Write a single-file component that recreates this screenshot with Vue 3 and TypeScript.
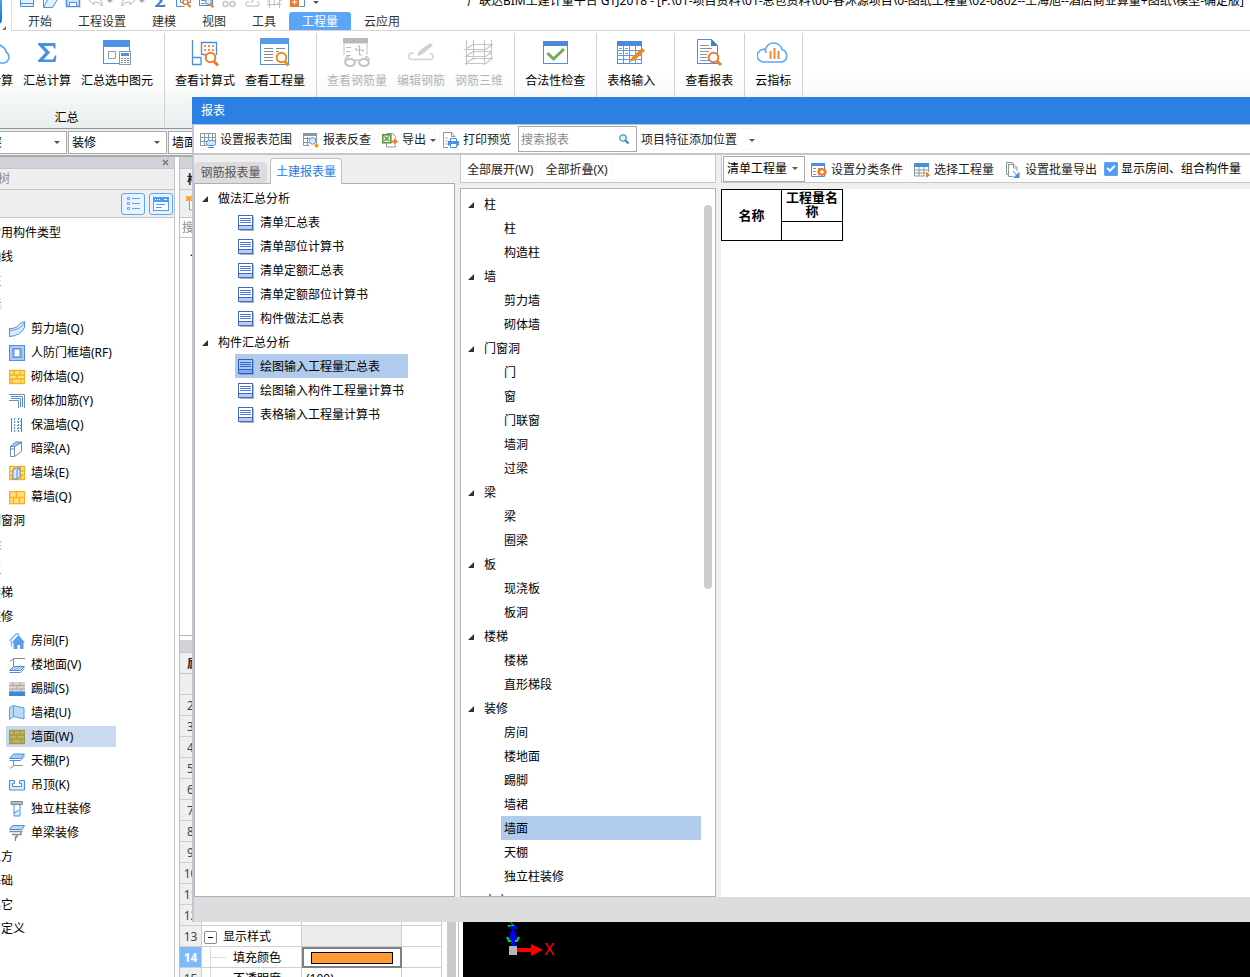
<script setup lang="ts">
import { ref } from 'vue'

interface RibbonItem { label: string; icon: string; disabled?: boolean }
interface RibbonGroup { items: RibbonItem[]; caption?: string; wide?: boolean }
interface NavRow { label: string; icon?: string; selected?: boolean }
interface TreeGroup { label: string; children: string[] }

const quick: { icon: string; drop?: boolean }[] = [
  { icon: 'qNew' }, { icon: 'qOpen' }, { icon: 'qSave' },
  { icon: 'qUndo', drop: true }, { icon: 'qRedo', drop: true },
  { icon: 'qSum' }, { icon: 'qFormula' }, { icon: 'qQuantity' },
  { icon: 'qGlasses' }, { icon: 'qEdit' }, { icon: 'qGrid' }, { icon: 'qAdd' },
]

const tabs = ['开始', '工程设置', '建模', '视图', '工具', '工程量', '云应用']
const activeTab = ref('工程量')

const ribbon: RibbonGroup[] = [
  {
    caption: '汇总',
    items: [
      { label: '云计算', icon: 'cloud' },
      { label: '汇总计算', icon: 'sigma' },
      { label: '汇总选中图元', icon: 'sumSelected' },
    ],
  },
  { items: [{ label: '查看计算式', icon: 'formula' }, { label: '查看工程量', icon: 'quantity' }] },
  {
    items: [
      { label: '查看钢筋量', icon: 'rebarView', disabled: true },
      { label: '编辑钢筋', icon: 'rebarEdit', disabled: true },
      { label: '钢筋三维', icon: 'rebar3d', disabled: true },
    ],
  },
  { items: [{ label: '合法性检查', icon: 'check' }] },
  { items: [{ label: '表格输入', icon: 'tableInput' }], wide: true },
  { items: [{ label: '查看报表', icon: 'report' }] },
  { items: [{ label: '云指标', icon: 'cloudIndex' }] },
]

const nav: NavRow[] = [
  { label: '常用构件类型' }, { label: '轴线' }, { label: '柱' }, { label: '墙' },
  { label: '剪力墙(Q)', icon: 'shearWall' },
  { label: '人防门框墙(RF)', icon: 'frameWall' },
  { label: '砌体墙(Q)', icon: 'brickWall' },
  { label: '砌体加筋(Y)', icon: 'brickRebar' },
  { label: '保温墙(Q)', icon: 'insulation' },
  { label: '暗梁(A)', icon: 'hiddenBeam' },
  { label: '墙垛(E)', icon: 'pier' },
  { label: '幕墙(Q)', icon: 'curtain' },
  { label: '门窗洞' }, { label: '梁' }, { label: '板' }, { label: '楼梯' }, { label: '装修' },
  { label: '房间(F)', icon: 'room' },
  { label: '楼地面(V)', icon: 'floor' },
  { label: '踢脚(S)', icon: 'skirting' },
  { label: '墙裙(U)', icon: 'dado' },
  { label: '墙面(W)', icon: 'wallFace', selected: true },
  { label: '天棚(P)', icon: 'ceiling' },
  { label: '吊顶(K)', icon: 'suspended' },
  { label: '独立柱装修', icon: 'columnFinish' },
  { label: '单梁装修', icon: 'beamFinish' },
  { label: '土方' }, { label: '基础' }, { label: '其它' }, { label: '自定义' },
]

const reports: TreeGroup[] = [
  { label: '做法汇总分析', children: ['清单汇总表', '清单部位计算书', '清单定额汇总表', '清单定额部位计算书', '构件做法汇总表'] },
  { label: '构件汇总分析', children: ['绘图输入工程量汇总表', '绘图输入构件工程量计算书', '表格输入工程量计算书'] },
]
const selectedReport = ref('绘图输入工程量汇总表')

const components: TreeGroup[] = [
  { label: '柱', children: ['柱', '构造柱'] },
  { label: '墙', children: ['剪力墙', '砌体墙'] },
  { label: '门窗洞', children: ['门', '窗', '门联窗', '墙洞', '过梁'] },
  { label: '梁', children: ['梁', '圈梁'] },
  { label: '板', children: ['现浇板', '板洞'] },
  { label: '楼梯', children: ['楼梯', '直形梯段'] },
  { label: '装修', children: ['房间', '楼地面', '踢脚', '墙裙', '墙面', '天棚', '独立柱装修'] },
  { label: '土方', children: [] },
]
const selectedComponent = ref('墙面')
const search = ref('')
const showCombined = ref(true)
const emptyRows = [2, 3, 4, 5, 6, 7, 8, 9, 10, 11, 12]

const brick = (line: string, fill: string) =>
  `<rect x="0.5" y="1.5" width="15" height="13" fill="${fill}" stroke="${line}" stroke-width="1.4"/><path d="M0 6h16M0 10h16M5 1.500v4.500M11 1.500v4.500M8 6v4M3 10v4.500M12 10v4.500" stroke="${line}" stroke-width="1.4" fill="none"/>`

const icons: Record<string, string> = {
  cloud: '<path d="M9 26H7a6.500 6.500 0 0 1-1-12.800A9 9 0 0 1 22 9a8 8 0 0 1 5 6 6 6 0 0 1-2 11z" fill="#fff" stroke="#5aa7f8" stroke-width="1.600"/>',
  sigma: '<path d="M7 6h17.500v5.500H23l-1-2.500H13l6 6.500-6.500 7H22l2-4h1.500L24.500 25H7v-1.500l7.500-8L7 7.500z" fill="#4a90e2"/>',
  sumSelected: '<rect x="2.500" y="3.500" width="26" height="23" fill="#fff" stroke="#4a8fe0"/><path d="M2 3h27v7H2z" fill="#4f94e4"/><path d="M7.500 14.500h7v7h-7z" fill="#fff" stroke="#909ca4"/><rect x="18.500" y="14.500" width="11" height="13" fill="#fff" stroke="#909ca4"/><path d="M20 16h8v3h-8z" fill="#4f94e4"/><path d="M20 21h2v1h-2zM23 21h2v1h-2zM26 21h2v1h-2zM20 23h2v1h-2zM23 23h2v1h-2zM26 23h2v1h-2zM20 25h2v1h-2zM23 25h2v1h-2zM26 25h2v1h-2z" fill="#7d8a92"/>',
  formula: '<path d="M3.500 3v25M3 27.500h9V20.500H3.500M12.500 18V5.500h15V18M12.500 17.500H17" fill="none" stroke="#4a8fe0" stroke-width="1.300"/><path d="M15 8h2v2h-2zM19 8h2v2h-2zM23 8h2v2h-2zM15 12h2v2h-2zM19 12h2v2h-2zM23 12h2v2h-2z" fill="#f28a4a"/><circle cx="21.500" cy="20.500" r="4.800" fill="#fff" stroke="#f07a2a" stroke-width="2"/><path d="M25 24.500l4 4" stroke="#f07a2a" stroke-width="3"/>',
  quantity: '<rect x="1.500" y="1.500" width="28" height="26" fill="#fff" stroke="#4a8fe0"/><path d="M1 1h29v6H1z" fill="#5a9be6"/><path d="M5 11.500h9M5 14.500h9M5 17.500h9M5 20.500h9M5 23.500h9M17 11.500h9M17 14.500h3" stroke="#7f8b93"/><circle cx="22.500" cy="20.500" r="4.800" fill="#fff" stroke="#f08a1e" stroke-width="2"/><path d="M26 24.500l3.500 4" stroke="#f08a1e" stroke-width="3"/>',
  rebarView: '<path d="M3 18V6h23v12" fill="none" stroke="#c2c2c2"/><path d="M2 1h25v5H2z" fill="#b9b9b9"/><path d="M5 10.500h5M5 14.500h4M5 18.500h5M14 13h9M18.500 9v9M15 11v2M22 15v-2M17 9h2M18 18h3" stroke="#bdbdbd" fill="none" stroke-width="1.200"/><path d="M4 23q1-4 4-3M28 23q-1-4-4-3M13 24q3-2 6 0" stroke="#c2c2c2" stroke-width="1.500" fill="none"/><ellipse cx="9" cy="25.500" rx="4.800" ry="3.500" fill="#fff" stroke="#c2c2c2" stroke-width="2.200"/><ellipse cx="23" cy="25.500" rx="4.800" ry="3.500" fill="#fff" stroke="#c2c2c2" stroke-width="2.200"/>',
  rebarEdit: '<path d="M9 16H7a3 3 0 0 0 0 6.500h18a3 3 0 0 0 0-6" fill="none" stroke="#d4d4d4" stroke-width="1.500"/><path d="M12 19l2-5L25 6l3 2.500-11 9z" fill="#d0d0d0"/>',
  rebar3d: '<path d="M3.500 3v25M10.500 3v20M21.500 3v25M28.500 3v20M2 12.500h21l6-5H10zM2 19.500h21l6-5M2 26.500h21l6-5H10l-8 5M10 14.500h19M10 14.500l-7 5" fill="none" stroke="#c4c4c4" stroke-width="1.100"/>',
  check: '<rect x="4.500" y="4.500" width="24" height="22" fill="#fff" stroke="#4a8fe0"/><path d="M4 4h25v5H4z" fill="#4a8ad8"/><path d="M8.500 16l6 6L25 12" fill="none" stroke="#72ad55" stroke-width="3"/>',
  tableInput: '<rect x="2.500" y="4.500" width="24" height="22" fill="#fff" stroke="#4a8fe0"/><path d="M2 4h25v5H2z" fill="#4a8ad8"/><path d="M2 13.500h25M2 18.500h25M2 22.500h25M8.500 9v18M14.500 9v18M20.500 9v18" stroke="#5a9be6"/><path d="M4 11.500h3M10 11.500h3M4 16.500h3M10 16.500h3" stroke="#909ca4"/><path d="M15 25l2-5L27 11l3 2.500L20 23z" fill="#f08a1e"/>',
  report: '<path d="M4.500 2.500h14l6 6v18h-20z" fill="#fff" stroke="#4a8fe0"/><path d="M18 2l7 7h-7z" fill="#3f7fd0"/><path d="M7 8.500h9M7 11.500h12M7 14.500h9M7 17.500h7M7 20.500h7M7 23.500h9" stroke="#8b979f"/><circle cx="20.500" cy="20.500" r="4.800" fill="#fff" stroke="#f07a2a" stroke-width="2"/><path d="M24 24l4 4" stroke="#f07a2a" stroke-width="3"/>',
  cloudIndex: '<path d="M10 25H7a6.200 6.200 0 0 1-2-12.200 5 5 0 0 1 3.500-.5A8.500 8.500 0 0 1 25 12.500a6.500 6.500 0 0 1 0 12.500H10M9 16a5 5 0 0 0-1-3" fill="#fff" stroke="#5aa7f8" stroke-width="1.600"/><path d="M13.500 22v-8M17.500 22V11M21.500 22v-8" stroke="#f28a3c" stroke-width="2"/>',

  qNew: '<path d="M1.500 2.500h13v12h-13zM1 11.500h14" fill="#e3f0fd" stroke="#4a8fe0"/>',
  qOpen: '<path d="M1.500 15.500l4-8h10l-5 8zM1.500 15V2" fill="#e3f0fd" stroke="#4a8fe0"/>',
  qSave: '<path d="M1.500 2.500h13v12h-13z" fill="#cfe3fb" stroke="#4a8fe0" stroke-width="1.500"/><path d="M4.500 10.500h7v4h-7z" fill="#fff" stroke="#4a8fe0"/>',
  qUndo: '<path d="M1 8l5-5v3c6 0 9 3 8 8-1-3-4-4-8-4v3z" fill="#fff" stroke="#b4b4b4"/>',
  qRedo: '<path d="M15 8l-5-5v3c-6 0-9 3-8 8 1-3 4-4 8-4v3z" fill="#fff" stroke="#b4b4b4"/>',
  qSum: '<path d="M3 2h10v3H7l4 4-4 4h5.500l1-1.500L13 15H3v-1l5-5-5-5z" fill="#4a7fd0"/>',
  qFormula: '<path d="M1.500 0v14.500h8M5.500 10.500V2.500h10v8z" fill="none" stroke="#4a8fe0"/><circle cx="10.500" cy="10" r="2.500" fill="#fff" stroke="#f07a2a" stroke-width="1.500"/><path d="M12.500 12l3 3" stroke="#f07a2a" stroke-width="2"/>',
  qQuantity: '<path d="M1.500 1.500h13v12h-13z" fill="#fff" stroke="#4a8fe0"/><path d="M3 8.500h4M3 11.500h4" stroke="#888"/><circle cx="10.500" cy="9.500" r="3" fill="#dbe9fb" stroke="#4a7fd0"/><path d="M12.500 12l3 3" stroke="#f08a1e" stroke-width="3"/>',
  qGlasses: '<path d="M2 2h12v5H2z" fill="none" stroke="#ccc"/><circle cx="4.500" cy="12" r="2.500" fill="none" stroke="#c4c4c4" stroke-width="1.500"/><circle cx="11.500" cy="12" r="2.500" fill="none" stroke="#c4c4c4" stroke-width="1.500"/>',
  qEdit: '<path d="M5 10H4a2 2 0 0 0 0 4h9a2 2 0 0 0 0-4M7 11l6-7" fill="none" stroke="#ccc" stroke-width="1.300"/>',
  qGrid: '<path d="M2.500 0v16M7.500 0v14M12.500 0v16M0 7.500h16M0 12.500h14M0 10l4-3M10 12l5-4" fill="none" stroke="#c0c0c0"/>',
  qAdd: '<path d="M10 4.500h4.500v10H10" fill="none" stroke="#4a8fe0"/><path d="M0 5h9v10H0z" fill="#f07a2a"/><path d="M2 10h5M4.500 7.500v5" stroke="#fff"/>',

  range: '<path d="M.5 1.500h15v9M.5 1.500v12h6M.5 5.500h15M.5 9.500h7M4.500 1v13M8.500 1v7M12.500 1v7" fill="none" stroke="#8b979f"/><rect x="6.500" y="8.500" width="9" height="5" rx="2" fill="#cfe3fb" stroke="#4a8fe0"/><path d="M8 15.500h6" stroke="#4a8fe0"/>',
  backcheck: '<path d="M.5 1.500h13v10M.5 1.500v12h6M.5 6.500h13M.5 10.500h6M4.500 5v9M9.500 5v3" fill="none" stroke="#8b979f"/><path d="M0 1h14v3H0z" fill="#8b979f"/><circle cx="9.500" cy="9" r="3.200" fill="#dbe9fb" stroke="#6f9bd8"/><path d="M13.500 11l2.500 2.500-2.500 2.500-2.500-2.500z" fill="#f59a1e"/>',
  export: '<path d="M4.500 1.500h6l3 3v2M13.500 13v2h-9V12" fill="#fff" stroke="#8b979f"/><rect x=".8" y="2.800" width="8" height="8" fill="#e6f3e0" stroke="#5a9a3c" stroke-width="1.600"/><path d="M2.500 4.500l4.500 4.500M7 4.500l-4.500 4.500" stroke="#5a9a3c" stroke-width="1.300"/><path d="M9 8.500h3V6l4 3.500-4 3.500v-2.500H9z" fill="#f07a2a"/>',
  print: '<path d="M9 .5H.5v15H5M8.500.5l3.500 4h-3.500z" fill="#fff" stroke="#8b979f"/><path d="M2.500 6h2M2.500 9h2M2.500 12h2" stroke="#8b979f"/><path d="M5 9h11v4.500H5z" fill="#4a8fe0"/><path d="M7.500 6.500h6v3h-6zM7.500 11.500h6v4h-6z" fill="#fff" stroke="#4a8fe0"/>',
  classify: '<path d="M.5 1.500h13v13H.5z" fill="#fff" stroke="#4a8fe0"/><path d="M0 1h14v3H0z" fill="#4a8fe0"/><path d="M2 6.500h3M7 6.500h4M2 9.500h3M2 12.500h3" stroke="#8b979f"/><path d="M11 5.500l1.500 1.300 2-.3.500 2 1 1.500-1 1.500-.5 2-2-.3-1.500 1.300-1.500-1.300-2 .3-.5-2-1-1.500 1-1.500.5-2 2 .3z" fill="#f07a2a"/><circle cx="11" cy="10" r="1.800" fill="#fff"/>',
  choose: '<path d="M0 1h15v4H0z" fill="#4a8fe0"/><path d="M.5 4.500v9.500h10M14.500 4.500V10M.5 8h14M.5 11h11M5 5v9M10 5v9" fill="none" stroke="#8b979f"/><path d="M12 9.500l4 3.500-4 3z" fill="#f07a2a"/>',
  batch: '<path d="M3 12.500H1.500V.5H7L9 2M3.500 2.500H9l3 3V9M3.500 2.500v12H8" fill="none" stroke="#8b979f"/><path d="M8.500 2.500V6H12" fill="none" stroke="#8b979f"/><path d="M8 9l4 4.500M14 10.500V16H8.500z" fill="#4a8fe0" stroke="#4a8fe0"/>',
  sheet: '<path d="M2 15h14V2" fill="none" stroke="#9aa0a8" stroke-width="1.500"/><rect x=".5" y=".5" width="14" height="14" fill="#fff" stroke="#4369c0"/><path d="M1 11h13v3H1z" fill="#b9cdf7"/><path d="M.5 10.500h14" stroke="#4369c0"/><path d="M2 3.500h11M2 5.500h11M2 7.500h11" stroke="#4f7be0"/>',
  sheetOn: '<path d="M2 15h14V2" fill="none" stroke="#7f92b4" stroke-width="1.500"/><rect x=".5" y=".5" width="14" height="14" fill="#a9c9f5" stroke="#2f5fb8"/><path d="M1 11h13v3H1z" fill="#7fa8ee"/><path d="M.5 10.500h14M2 3.500h11M2 5.500h11M2 7.500h11" stroke="#2f66c8"/>',

  shearWall: '<path d="M.5 7.500Q8 8 11.500 2L15.500.5v6Q11 15 .5 15.500z" fill="#dbeafc" stroke="#4a8fe0"/><path d="M.5 9.500Q11 9.500 15.500 1.500" fill="none" stroke="#6a97cc"/>',
  frameWall: '<rect x=".5" y=".5" width="15" height="15" fill="#a9cdf8" stroke="#4a8fe0"/><rect x="3.500" y="3.500" width="9" height="9" fill="#a9cdf8" stroke="#6aa4ea"/><rect x="5" y="4" width="6" height="8" fill="#fff" stroke="#5a86b8"/>',
  brickWall: brick('#fbb116', '#ffe08a'),
  brickRebar: '<path d="M0 1.500h15.500V15M0 7.500h9.500V15" fill="none" stroke="#808c94"/><path d="M2 3.500h11.500V14M2 5.500h9.500V14" fill="none" stroke="#4a8fe0"/>',
  insulation: '<path d="M2.500 1v14M12.500 1v14" stroke="#4a7fc0"/><path d="M5.500 1v14M9.500 1v14" stroke="#4a8fe0" stroke-dasharray="2 1"/><path d="M2 4.500h11M2 8.500h11M2 11.500h11" stroke="#4a8fe0" stroke-dasharray="1 2"/>',
  hiddenBeam: '<path d="M1.500 5.500h4v10h-4zM5.500 15.500l7-5V1.500l-7 4" fill="#fff" stroke="#808c94"/><path d="M1.500 5.500l5-4.500h6.500l-7.500 4.500zM1.500 8h4" fill="#a9cdf8" stroke="#4a8fe0"/>',
  pier: brick('#fbb116', '#ffe08a') + '<path d="M4 5l3-2h4v9l-3 2H4z" fill="#dbeafc" stroke="#4a8fe0"/><path d="M8 14V5L11 3" fill="none" stroke="#4a8fe0"/>',
  curtain: '<rect x=".6" y="2.600" width="15" height="12" fill="#ffe08a" stroke="#fbb116" stroke-width="1.400"/><path d="M0 8.500h16M7.500 2v6.500M10.500 8.500V15M4.500 8.500V15" stroke="#fbb116" stroke-width="1.400"/>',
  room: '<path d="M.5 8L7 1h3M2.500 8v5.500" fill="none" stroke="#7fb2f0" stroke-width="1.300"/><path d="M2.500 9.500l7-7.500L16 9.500h-1.500V16h-3.500v-4H8.500v4H4.500V9.500z" fill="#5a9fee"/>',
  floor: '<path d="M4.500 9.500V1.500H16M1 4.500l4-3" fill="none" stroke="#808c94"/><path d="M.5 13.500l4-4h11l-4 4z" fill="#a9cdf8" stroke="#4a8fe0"/><path d="M.5 15.500h11l4-4" fill="none" stroke="#4a8fe0"/>',
  skirting: '<path d="M0 1h16v10H0z" fill="#d4d4d4"/><path d="M0 4.500h16M0 8h16M4 1v3M11 1v3M8 5v3M3 8v3M12 8v3" stroke="#a9a9a9"/><path d="M0 10.500h16V15H0z" fill="#3f87dc"/>',
  dado: '<path d="M.5 2.500l4-2v11l-4 3zM4.500.5L15 3v11l-10.500-2.500z" fill="#bcd8f9" stroke="#5a9be6"/>',
  wallFace: brick('#a59a3a', '#b9b56c'),
  ceiling: '<path d="M.5 5.500l4-4.500h11l-3.500 4.500z" fill="#a9cdf8" stroke="#4a8fe0"/><path d="M4.500 8v4.500H14M1 15.500l4-3" fill="none" stroke="#808c94"/><path d="M.5 7.500h11l4-4.500" fill="none" stroke="#4a8fe0"/>',
  suspended: '<path d="M.5 3.500h5v3h-2v3h9v-3h-2v-3h5v9.500H.5z" fill="#dbeafc" stroke="#4a8fe0"/>',
  columnFinish: '<path d="M2 .5h11.500v3H2z" fill="#b4bcc2" stroke="#808c94"/><path d="M5 10h5v5H5z" fill="#dbeafc"/><path d="M5 4v11h6V4M5 12l5-3" fill="none" stroke="#4a8fe0"/>',
  beamFinish: '<path d="M.5 4.500l3-4h12l-2.500 4z" fill="#bcd8f9" stroke="#4a8fe0"/><path d="M.5 6.500h13M3 9.500h9V7M8 10v2H6.500v4" fill="none" stroke="#808c94" stroke-width="1.400"/>',
  newItem: '<path d="M3.500 4v11h9V4" fill="#fff" stroke="#8b979f"/><path d="M0 1h6v5H0z" fill="#ffc04a"/><path d="M0 1l6 5M6 1L0 6" stroke="#f08a1e"/>',
}
</script>

<template>
  <div class="app">
    <header class="ribbon">
      <span class="logo"></span>
      <svg class="logo-corner" viewBox="0 0 5 5" aria-hidden="true"><path d="M5 0v5H0z" fill="#777" /></svg>
      <div class="top">
        <div class="quick">
          <button v-for="q in quick" :key="q.icon" type="button" :class="{ split: q.drop }">
            <svg class="i16" viewBox="0 0 16 16" v-html="icons[q.icon]"></svg>
            <svg v-if="q.drop" class="caret" viewBox="0 0 6 3"><path d="M0 0h6L3 3z" fill="#aaa" /></svg>
          </button>
          <button type="button" class="more"><svg class="caret" viewBox="0 0 6 3"><path d="M0 0h6L3 3z" fill="#555" /></svg></button>
        </div>
        <p class="title">广联达BIM土建计量平台 GTJ2018 - [F:\01-项目资料\01-总包资料\00-春沐源项目\0-图纸工程量\02-0802--王海旭--酒店商业算量+图纸\模型-确定版]</p>
      </div>
      <nav class="tabs">
        <button v-for="t in tabs" :key="t" type="button" :class="{ active: t === activeTab }" @click="activeTab = t">{{ t }}</button>
      </nav>
      <div class="groups">
        <section v-for="(g, gi) in ribbon" :key="gi" class="group" :class="{ wide: g.wide }">
          <div class="group-items">
            <button v-for="b in g.items" :key="b.label" type="button" :disabled="b.disabled">
              <svg class="i32" viewBox="0 0 32 32" v-html="icons[b.icon]"></svg>
              <span>{{ b.label }}</span>
            </button>
          </div>
          <p v-if="g.caption" class="caption">{{ g.caption }}</p>
        </section>
      </div>
    </header>

    <div class="filters">
      <label v-for="(f, i) in ['首层', '装修', '墙面']" :key="f" class="combo" :class="'combo-' + i">
        <select :aria-label="f"><option>{{ f }}</option></select>
        <svg class="caret" viewBox="0 0 6 3"><path d="M0 0h6L3 3z" fill="#555" /></svg>
      </label>
    </div>

    <div class="workspace">
      <aside class="nav-panel">
        <div class="grip"><button type="button" aria-label="关闭"><svg viewBox="0 0 7 7"><path d="M1 1l5 5M6 1L1 6" stroke="#777" stroke-width="1.500" /></svg></button></div>
        <h2>导航树</h2>
        <div class="nav-tools">
          <button type="button" aria-label="列表">
            <svg viewBox="0 0 16 14"><path d="M2.500.5h2v2h-2zM2.500 5.500h2v2h-2zM2.500 10.500h2v2h-2z" fill="#fff" stroke="#5aa7f8" /><path d="M7 1.500h8M7 6.500h8M7 11.500h8" stroke="#5aa7f8" /></svg>
          </button>
          <button type="button" aria-label="卡片">
            <svg viewBox="0 0 16 14"><rect x=".5" y=".5" width="15" height="13" fill="#fff" stroke="#4a9cf5" /><path d="M0 0h16v5H0z" fill="#4a9cf5" /><path d="M2 2.500h1M4 2.500h1M6 2.500h1M11 2.500h3" stroke="#fff" /><path d="M3 7.500h9M3 10.500h6" stroke="#4a9cf5" /></svg>
          </button>
        </div>
        <ul>
          <li v-for="n in nav" :key="n.label" :class="{ leaf: n.icon, selected: n.selected }">
            <span class="nav-item">
              <svg v-if="n.icon" class="i16" viewBox="0 0 16 16" v-html="icons[n.icon]"></svg>{{ n.label }}
            </span>
          </li>
        </ul>
      </aside>

      <div class="side">
        <section class="comp-list">
          <div class="grip"></div>
          <h2>构件列表</h2>
          <div class="comp-tools"><svg class="i16" viewBox="0 0 16 16" v-html="icons.newItem"></svg></div>
          <input type="text" placeholder="搜索构件..." aria-label="搜索构件" />
          <div class="comp-root"><svg class="twist" viewBox="0 0 6 6"><path d="M6 0v6H0z" fill="#333" /></svg></div>
        </section>
        <section class="props">
          <div class="grip"></div>
          <h2>属性列表</h2>
          <div class="props-body">
            <table>
              <colgroup><col class="c-num" /><col class="c-name" /><col class="c-val" /><col /></colgroup>
              <tbody>
                <tr><th></th><td></td><td></td><td></td></tr>
                <tr v-for="n in emptyRows" :key="n"><th>{{ n }}</th><td></td><td></td><td></td></tr>
                <tr><th>13</th><td><span class="branch"><button type="button" aria-label="折叠"></button>显示样式</span></td><td class="shade"></td><td></td></tr>
                <tr><th class="current">14</th><td class="sub">填充颜色</td><td class="picked"><span class="swatch"></span></td><td></td></tr>
                <tr><th>15</th><td class="sub">不透明度</td><td>(100)</td><td></td></tr>
              </tbody>
            </table>
            <span class="bar"></span>
          </div>
        </section>
      </div>

      <div class="canvas">
        <svg class="axis" viewBox="0 0 48 48">
          <path d="M5 10h8v2H8l5 5H5v-2h5z" fill="#00e020" />
          <path d="M6 16h8v3H6z" fill="#0000ff" />
          <path d="M10 18l5 11H5z" fill="#0000ff" />
          <path d="M4 27l2 4h3M16 27l-2 4h-3" fill="none" stroke="#00e020" stroke-width="2" />
          <path d="M8 26h4v14H8z" fill="#0000ff" />
          <path d="M6 36h8v9H6z" fill="#b8b8b8" />
          <path d="M14 38h14v-4l12 6-12 6v-4H14z" fill="#ff0000" />
        </svg>
        <span class="axis-x">X</span>
      </div>
    </div>

    <div class="dialog" role="dialog" aria-label="报表">
      <h1>报表</h1>
      <div class="toolbar">
        <button type="button"><svg class="i16" viewBox="0 0 16 16" v-html="icons.range"></svg>设置报表范围</button>
        <button type="button"><svg class="i16" viewBox="0 0 16 16" v-html="icons.backcheck"></svg>报表反查</button>
        <button type="button" class="drop"><svg class="i16" viewBox="0 0 16 16" v-html="icons.export"></svg>导出<svg class="caret" viewBox="0 0 6 3"><path d="M0 0h6L3 3z" fill="#555" /></svg></button>
        <button type="button"><svg class="i16" viewBox="0 0 16 16" v-html="icons.print"></svg>打印预览</button>
        <label class="search">
          <input v-model="search" type="text" placeholder="搜索报表" aria-label="搜索报表" />
          <svg viewBox="0 0 10 10"><circle cx="4" cy="4" r="3.200" fill="#eaf6fc" stroke="#3f9cc8" stroke-width="1.300" /><path d="M6.500 6.500l3 3" stroke="#3f7fc0" stroke-width="2" /></svg>
        </label>
        <button type="button" class="plain">项目特征添加位置<svg class="caret" viewBox="0 0 6 3"><path d="M0 0h6L3 3z" fill="#555" /></svg></button>
      </div>

      <div class="content">
        <section class="col reports">
          <div class="report-tabs">
            <button type="button">钢筋报表量</button>
            <button type="button" class="active">土建报表量</button>
          </div>
          <div class="pane">
            <ul class="tree">
              <li v-for="g in reports" :key="g.label">
                <div class="branch-row"><svg class="twist" viewBox="0 0 6 6"><path d="M6 0v6H0z" fill="#333" /></svg>{{ g.label }}</div>
                <ul>
                  <li v-for="c in g.children" :key="c" class="leaf-row" :class="{ selected: c === selectedReport }" @click="selectedReport = c">
                    <svg class="i16" viewBox="0 0 16 16" v-html="c === selectedReport ? icons.sheetOn : icons.sheet"></svg>{{ c }}
                  </li>
                </ul>
              </li>
            </ul>
          </div>
        </section>

        <section class="col">
          <div class="bar-box expand">
            <button type="button">全部展开(W)</button>
            <button type="button">全部折叠(X)</button>
          </div>
          <div class="pane parts">
            <ul class="tree">
              <li v-for="g in components" :key="g.label">
                <div class="branch-row"><svg class="twist" viewBox="0 0 6 6"><path d="M6 0v6H0z" fill="#333" /></svg>{{ g.label }}</div>
                <ul>
                  <li v-for="c in g.children" :key="c" class="leaf-row" :class="{ selected: c === selectedComponent }" @click="selectedComponent = c">{{ c }}</li>
                </ul>
              </li>
            </ul>
            <div class="track"><span></span></div>
          </div>
        </section>

        <section class="col">
          <div class="bar-box options">
            <label class="combo kind">
              <select aria-label="工程量类型"><option>清单工程量</option></select>
              <svg class="caret" viewBox="0 0 6 3"><path d="M0 0h6L3 3z" fill="#555" /></svg>
            </label>
            <button type="button"><svg class="i16" viewBox="0 0 16 16" v-html="icons.classify"></svg>设置分类条件</button>
            <button type="button"><svg class="i16" viewBox="0 0 16 16" v-html="icons.choose"></svg>选择工程量</button>
            <button type="button"><svg class="i16" viewBox="0 0 16 16" v-html="icons.batch"></svg>设置批量导出</button>
            <label class="tick"><input v-model="showCombined" type="checkbox" />显示房间、组合构件量</label>
          </div>
          <div class="sheet">
            <table>
              <colgroup><col class="c-first" /><col /></colgroup>
              <tbody>
                <tr><th rowspan="2">名称</th><th class="wrap">工程量名称</th></tr>
                <tr><td></td></tr>
              </tbody>
            </table>
          </div>
        </section>
      </div>
      <footer></footer>
    </div>
  </div>
</template>

<style>
html, body { margin: 0; overflow: hidden; }
</style>

<style scoped>
.app {
  position: relative;
  display: flex;
  flex-direction: column;
  height: 100vh;
  overflow: hidden;
  background: #fff;
  color: #000;
  font: 12px/16px "Noto Sans", "Noto Sans CJK SC", sans-serif;
}
.app *, .app *::before { box-sizing: border-box; }
button, input, select { font: inherit; color: inherit; margin: 0; padding: 0; border: 0; background: none; border-radius: 0; outline: 0; }
select { appearance: none; }
ul, h1, h2, p { margin: 0; padding: 0; list-style: none; font-size: 12px; font-weight: 400; }
svg { display: block; flex: none; }
.i16 { width: 16px; height: 16px; }
.i32 { width: 32px; height: 32px; }
.caret { width: 6px; height: 3px; }
.twist { width: 6px; height: 6px; }

.ribbon { position: relative; flex: none; height: 129px; border-bottom: 1px solid #8f9499; overflow: hidden; }
.logo { position: absolute; left: -20px; top: -8px; width: 22px; height: 32px; border-radius: 4px; background: linear-gradient(#58b4f0, #0a74d8); }
.logo-corner { position: absolute; left: 2px; top: 26px; width: 4px; height: 4px; }
.top { display: flex; height: 12px; margin-left: 11px; border-left: 1px solid #dedede; }
.quick { display: flex; gap: 7px; flex: none; width: 455px; height: 16px; margin-top: -8px; padding-left: 7px; align-items: flex-start; }
.quick button { display: flex; gap: 3px; height: 16px; align-items: flex-start; }
.quick .split { width: 25px; }
.quick .caret { margin-top: 8px; }
.quick .more .caret { margin-top: 9px; }
.title { flex: 1; min-width: 0; height: 16px; margin-top: -7px; white-space: nowrap; overflow: hidden; }
.tabs { display: flex; height: 19px; margin-left: 11px; padding-left: 3px; border-left: 1px solid #dedede; border-bottom: 1px solid #d6d6d6; }
.tabs button { height: 18px; padding: 2px 13px 0; line-height: 16px; color: #333; }
.tabs .active { background: #5aa5f7; color: #fff; border-radius: 3px 3px 0 0; }
.groups { display: flex; height: 97px; margin-left: -33px; background: linear-gradient(#fff 45%, #e9eeee); }
.group { height: 94px; margin-top: 2px; padding: 4px 6px 0 5px; border-right: 1px solid #d2d2d2; }
.group.wide { padding-right: 14px; }
.group-items { display: flex; }
.group button { display: flex; flex-direction: column; align-items: center; gap: 4px; padding: 0 5px; white-space: nowrap; }
.group button:disabled { color: #b4b4b4; }
.caption { margin-top: 21px; padding-left: 3px; text-align: center; }

.filters { flex: none; display: flex; gap: 1px; height: 26px; padding: 2px 0 1px; margin-left: -28px; background: #eef1f1; }
.combo { display: flex; align-items: center; padding: 0 6px 0 3px; border: 1px solid #a9a9a9; background: #fff; }
.combo select { flex: 1; min-width: 0; height: 20px; }
.combo-0 { width: 95px; padding-left: 5px; }
.combo-1, .combo-2 { width: 99px; }

.workspace { flex: 1; min-height: 0; display: flex; gap: 4px; border-top: 2px solid #a9adb2; background: #fff; }
.grip { display: flex; justify-content: flex-end; align-items: center; height: 11px; padding-right: 5px; background: #d2d3d9; }
.grip svg { width: 7px; height: 7px; }
.nav-panel { flex: none; width: 175px; border-right: 1px solid #c0c3c9; overflow: hidden; }
.nav-panel h2 { height: 22px; border: solid #c4c6cb; border-width: 1px 0; line-height: 20px; text-indent: -26px; color: #8a8a8a; background: #efeff0; }
.nav-tools { display: flex; justify-content: flex-end; gap: 4px; height: 28px; padding: 3px 1px 0 0; border-bottom: 1px solid #c4c6cb; background: #efeff0; }
.nav-tools button { display: flex; align-items: center; justify-content: center; width: 24px; height: 22px; border: 1px solid #5aa7f8; border-radius: 3px; background: #e9f3fe; }
.nav-tools svg { width: 16px; height: 14px; }
.nav-panel ul { padding-top: 2px; }
.nav-panel li { display: flex; align-items: center; height: 24px; padding-left: 6px; white-space: nowrap; }
.nav-panel li:not(.leaf) { text-indent: -17px; }
.nav-item { display: flex; align-items: center; gap: 6px; height: 21px; padding: 2px 0 0 3px; width: 110px; }
.nav-panel li:not(.leaf) .nav-item { padding-left: 0; }
.selected .nav-item { background: #c9d9ef; }

.side { flex: none; display: flex; flex-direction: column; gap: 4px; width: 280px; border: solid #b9bcc2; border-width: 0 1px; }
.side h2 { height: 22px; border: solid #c4c6cb; border-width: 1px 0; padding-left: 7px; line-height: 21px; font-weight: 700; background: #efeff0; color: #222; }
.comp-list { flex: 1; min-height: 0; border-bottom: 1px solid #b0b0b0; overflow: hidden; }
.comp-tools { height: 28px; padding: 5px 6px; background: #efeff0; border-bottom: 1px solid #c4c6cb; }
.comp-list input { display: block; width: 100%; height: 20px; padding-left: 2px; border-bottom: 1px solid #c4c6cb; }
.comp-list input::placeholder, .search input::placeholder { color: #8a8a8a; opacity: 1; }
.comp-root { padding: 12px 10px; }
.props { flex: none; height: 337px; overflow: hidden; }
.props .grip { height: 12px; }
.props-body { display: flex; }
.props table { width: 262px; table-layout: fixed; border-collapse: separate; border-spacing: 0; }
.c-num { width: 22px; }
.c-name { width: 100px; }
.c-val { width: 100px; }
.props th, .props td { height: 21px; padding: 2px 0 0; border: solid #cfcfcf; border-width: 0 1px 1px 0; white-space: nowrap; }
.props th { font-weight: 400; text-align: center; background: #efeff0; color: #444; }
.props td { padding-left: 4px; }
.props .current { background: #7db8fb; color: #fff; font-weight: 700; }
.props .sub { padding-left: 31px; background: linear-gradient(#ddd, #ddd) 8px 10px / 16px 1px no-repeat, linear-gradient(#ddd, #ddd) 8px 0 / 1px 21px no-repeat; }
.branch { display: flex; align-items: center; gap: 6px; margin-left: -2px; }
.branch button { display: flex; align-items: center; justify-content: center; width: 13px; height: 13px; border: 1px solid #888; border-radius: 2px; }
.branch button::before { content: ""; width: 5px; height: 1px; background: #000; }
.shade { background: #ebebeb; }
.props .picked { padding: 0 7px; border: 2px solid #808080; }
.swatch { display: block; height: 12px; border: 1px solid #000; background: #ff9a36; }
.bar { width: 9px; margin-left: 5px; background: #cacaca; }

.canvas { position: relative; flex: 1; background: #000; }
.axis { position: absolute; left: 40px; bottom: 19px; width: 48px; height: 48px; }
.axis-x { position: absolute; left: 81px; bottom: 19px; font: 16px/16px "Liberation Sans", sans-serif; color: #f00; }

.dialog { position: absolute; inset: 97px 0 55px 192px; display: flex; flex-direction: column; border-left: 2px solid #c0c6d6; background: #efeff0; }
.dialog h1 { flex: none; height: 27px; margin-left: -2px; padding-left: 9px; line-height: 27px; color: #fff; background: #2c80e2; }
.toolbar { flex: none; display: flex; align-items: center; gap: 3px; height: 31px; padding-left: 2px; border-top: 1px solid #c0c6d0; border-bottom: 2px solid #c4c6cc; background: #fff; color: #222; }
.toolbar button, .bar-box button { display: flex; align-items: center; gap: 4px; height: 22px; padding: 2px 4px 0; border-radius: 3px; box-shadow: inset 0 0 0 1px #f8f8f8; white-space: nowrap; }
.toolbar .drop { width: 58px; }
.toolbar .plain { gap: 12px; padding-left: 1px; }
.search { display: flex; align-items: center; width: 119px; height: 26px; padding: 0 7px 0 2px; border: 1px solid #a9a9a9; }
.search input { flex: 1; min-width: 0; height: 20px; }
.search svg { width: 10px; height: 10px; }

.content { flex: 1; min-height: 0; display: grid; grid-template-columns: 261px 256px minmax(0, 1fr); grid-template-rows: minmax(0, 1fr); column-gap: 5px; }
.col { display: flex; flex-direction: column; min-height: 0; }
.report-tabs { flex: none; display: flex; align-items: flex-end; gap: 3px; height: 28px; padding-top: 3px; }
.report-tabs button { height: 21px; width: 73px; color: #555; background: #dcdcdd; border-radius: 4px 4px 0 0; }
.report-tabs .active { z-index: 1; height: 26px; width: 72px; margin-bottom: -1px; color: #1e7be8; background: #fff; border: 1px solid #c0c0c4; border-bottom: 0; }
.pane { flex: 1; min-height: 0; overflow: hidden; border: 1px solid #aeb0b4; background: #fff; }
.tree { width: max-content; padding-top: 2px; }
.branch-row { display: flex; align-items: center; gap: 10px; height: 24px; padding: 1px 0 0 7px; }
.leaf-row { display: flex; align-items: center; gap: 6px; height: 24px; margin-left: 40px; padding: 1px 4px 0 3px; white-space: nowrap; }
.leaf-row.selected { background: #b1cbec; }
.bar-box { flex: none; display: flex; height: 28px; border: 1px solid #c4c6cc; border-top: 0; background: #fff; color: #222; }
.expand { align-items: center; gap: 4px; padding-left: 2px; }
.parts { display: flex; margin-top: 5px; }
.parts .tree { flex: none; width: 240px; padding-top: 3px; }
.track { padding: 16px 3px 0; }
.track span { display: block; width: 8px; height: 384px; border-radius: 4px; background: #cdcdcd; }
.options { align-items: center; gap: 3px; padding-left: 1px; border-right: 0; overflow: hidden; }
.kind { flex: none; width: 82px; height: 26px; color: #000; margin-right: -1px; }
.tick { display: flex; align-items: center; gap: 3px; white-space: nowrap; color: #000; }
.tick input { appearance: none; flex: none; width: 14px; height: 14px; border-radius: 1px; border: 1px solid #5aa5f7; }
.tick input:checked { background: #4f9cf5; }
.tick input:checked::before { content: ""; display: block; width: 8px; height: 5px; margin: 2px; border: solid #fff; border-width: 0 0 2px 2px; transform: rotate(-45deg); }
.sheet { flex: 1; margin-top: 6px; background: #fff; }
.sheet table { border-collapse: collapse; table-layout: fixed; width: 122px; }
.c-first { width: 60px; }
.sheet th, .sheet td { border: 1px solid #000; padding: 0; }
.sheet th { height: 32px; font: 700 13px/14px "Noto Sans CJK SC", sans-serif; }
.sheet .wrap { vertical-align: top; }
.sheet td { height: 19px; }
footer { flex: none; height: 25px; background: #dddde0; }
</style>
